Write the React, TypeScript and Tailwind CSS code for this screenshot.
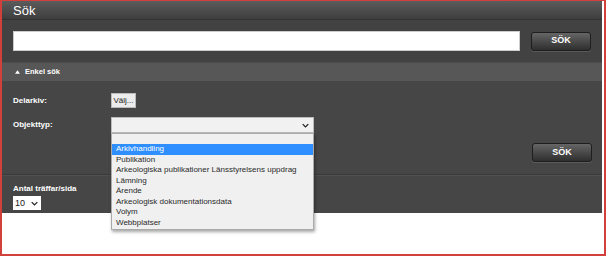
import React from "react";

const options = [
  "Arkivhandling",
  "Publikation",
  "Arkeologiska publikationer Länsstyrelsens uppdrag",
  "Lämning",
  "Ärende",
  "Arkeologisk dokumentationsdata",
  "Volym",
  "Webbplatser",
];

function Chevron({ className }: { className?: string }) {
  return (
    <svg viewBox="0 0 10 6" className={className} fill="none">
      <path d="M1 1l4 4 4-4" stroke="#222" strokeWidth="1.8" />
    </svg>
  );
}

function DarkButton() {
  return (
    <button className="w-[60px] h-[19px] rounded-[3px] border border-[#1e1e1e] bg-gradient-to-b from-[#666] to-[#2f2f2f] text-white text-[9px] font-bold shadow-[0_1px_0_rgba(255,255,255,0.12)]">
      SÖK
    </button>
  );
}

export default function App() {
  return (
    <div className="w-[606px] h-[256px] bg-white border-l-2 border-t border-b-2 border-r-2 border-[#d2403c] font-['Liberation_Sans',Arial,sans-serif]">
      <div className="w-[600px] bg-[#444]">
        <div className="h-[19px] bg-gradient-to-b from-[#5c5c5c] to-[#3e3e3e] border-b border-[#333] flex items-center px-[11px]">
          <span className="text-white text-[13px] leading-none">Sök</span>
        </div>
        <div className="h-[42px] bg-[#424242] flex items-center pl-[11px] pr-[11px] gap-[11px]">
          <div className="flex-1 h-[20px] bg-white border border-[#ccc]" />
          <DarkButton />
        </div>
        <div className="h-[19px] bg-[#575757] flex items-center pl-[13px] gap-[5px] border-t border-[#4c4c4c]">
          <svg viewBox="0 0 6 4" className="w-[5px] h-[4px]">
            <path d="M0 4L3 0L6 4Z" fill="#fff" />
          </svg>
          <span className="text-white text-[7.5px] font-bold">Enkel sök</span>
        </div>
        <div className="relative h-[132px] bg-[#464646] pl-[11px] pr-[11px]">
          <div className="flex items-center pt-[12px] h-[27px]">
            <span className="w-[98px] text-white text-[8px] font-bold">Delarkiv:</span>
            <div className="h-[15px] w-[25px] flex items-center justify-center bg-[#ececec] border border-[#bbb] text-[#222] text-[8px]">
              Välj...
            </div>
          </div>
          <div className="flex items-center mt-[9px]">
            <span className="w-[98px] text-white text-[8px] font-bold">Objekttyp:</span>
            <div className="h-[16px] w-[203px] bg-[#f1f1f1] border border-[#bbb] flex items-center justify-end pr-[4px]">
              <Chevron className="w-[7px] h-[5px]" />
            </div>
          </div>
          <div className="flex justify-end mt-[10px] mr-[-1px]">
            <DarkButton />
          </div>
          <div className="mt-[12px] -mx-[11px] border-t border-[#3a3a3a] border-b border-b-[#505050]" />
          <div className="pt-[9px] text-white text-[8px] font-bold leading-none">Antal träffar/sida</div>
          <div className="mt-[3px] w-[28px] h-[14px] bg-white flex items-center justify-between pl-[2px] pr-[3px]">
            <span className="text-[9px] text-[#222] leading-none">10</span>
            <Chevron className="w-[7px] h-[5px]" />
          </div>
          <div className="absolute left-[109px] top-[52px] w-[203px] bg-[#f0f0f0] border border-[#aaa] shadow-[1px_2px_3px_rgba(0,0,0,0.35)] pb-[1px] whitespace-nowrap">
            <div className="h-[10px]" />
            {options.map((o, i) => (
              <div
                key={o}
                className={
                  i === 0
                    ? "h-[10.5px] leading-[10.5px] pl-[4px] text-[8px] bg-[#2f8fff] text-white"
                    : "h-[10.5px] leading-[10.5px] pl-[4px] text-[8px] text-[#2a2a2a]"
                }
              >
                {o}
              </div>
            ))}
          </div>
        </div>
      </div>
    </div>
  );
}
